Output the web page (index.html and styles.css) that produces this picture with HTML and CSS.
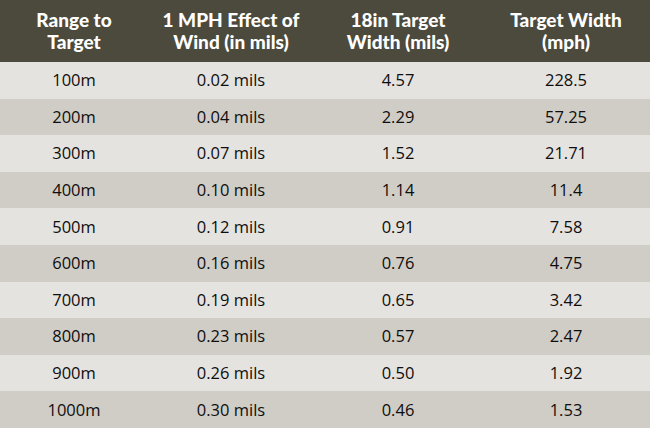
FILE: index.html
```html
<!DOCTYPE html>
<html>
<head>
<meta charset="utf-8">
<link rel="stylesheet" href="styles.css">
</head>
<body>
<table class="wind-table">
  <colgroup>
    <col class="c1"><col class="c2"><col class="c3"><col class="c4">
  </colgroup>
  <thead>
    <tr>
      <th>Range to<br>Target</th>
      <th>1 MPH Effect of<br>Wind (in mils)</th>
      <th>18in Target<br>Width (mils)</th>
      <th>Target Width<br>(mph)</th>
    </tr>
  </thead>
  <tbody>
    <tr><td>100m</td><td>0.02 mils</td><td>4.57</td><td>228.5</td></tr>
    <tr><td>200m</td><td>0.04 mils</td><td>2.29</td><td>57.25</td></tr>
    <tr><td>300m</td><td>0.07 mils</td><td>1.52</td><td>21.71</td></tr>
    <tr><td>400m</td><td>0.10 mils</td><td>1.14</td><td>11.4</td></tr>
    <tr><td>500m</td><td>0.12 mils</td><td>0.91</td><td>7.58</td></tr>
    <tr><td>600m</td><td>0.16 mils</td><td>0.76</td><td>4.75</td></tr>
    <tr><td>700m</td><td>0.19 mils</td><td>0.65</td><td>3.42</td></tr>
    <tr><td>800m</td><td>0.23 mils</td><td>0.57</td><td>2.47</td></tr>
    <tr><td>900m</td><td>0.26 mils</td><td>0.50</td><td>1.92</td></tr>
    <tr><td>1000m</td><td>0.30 mils</td><td>0.46</td><td>1.53</td></tr>
  </tbody>
</table>
</body>
</html>
```

FILE: styles.css
```css
html, body {
  margin: 0;
  padding: 0;
  background: #d0cdc6;
}
.wind-table {
  width: 650px;
  border-collapse: collapse;
  table-layout: fixed;
  font-family: "Open Sans", "Liberation Sans", sans-serif;
}
.c1 { width: 148px; }
.c2 { width: 166px; }
.c3 { width: 168px; }
.c4 { width: 168px; }
.wind-table th {
  background: #4b4a3c;
  color: #ffffff;
  font-family: "Lato", "Open Sans", sans-serif;
  font-weight: 900;
  font-size: 19px;
  line-height: 22px;
  height: 62px;
  padding: 0;
  text-align: center;
  vertical-align: middle;
}
.wind-table td {
  height: 36.6px;
  padding: 0;
  text-align: center;
  vertical-align: middle;
  font-size: 16.5px;
  font-weight: 500;
  line-height: 20px;
  color: #0e0e0e;
}
.wind-table tbody tr:nth-child(odd) { background: #e5e3df; }
.wind-table tbody tr:nth-child(even) { background: #d0cdc6; }
```
